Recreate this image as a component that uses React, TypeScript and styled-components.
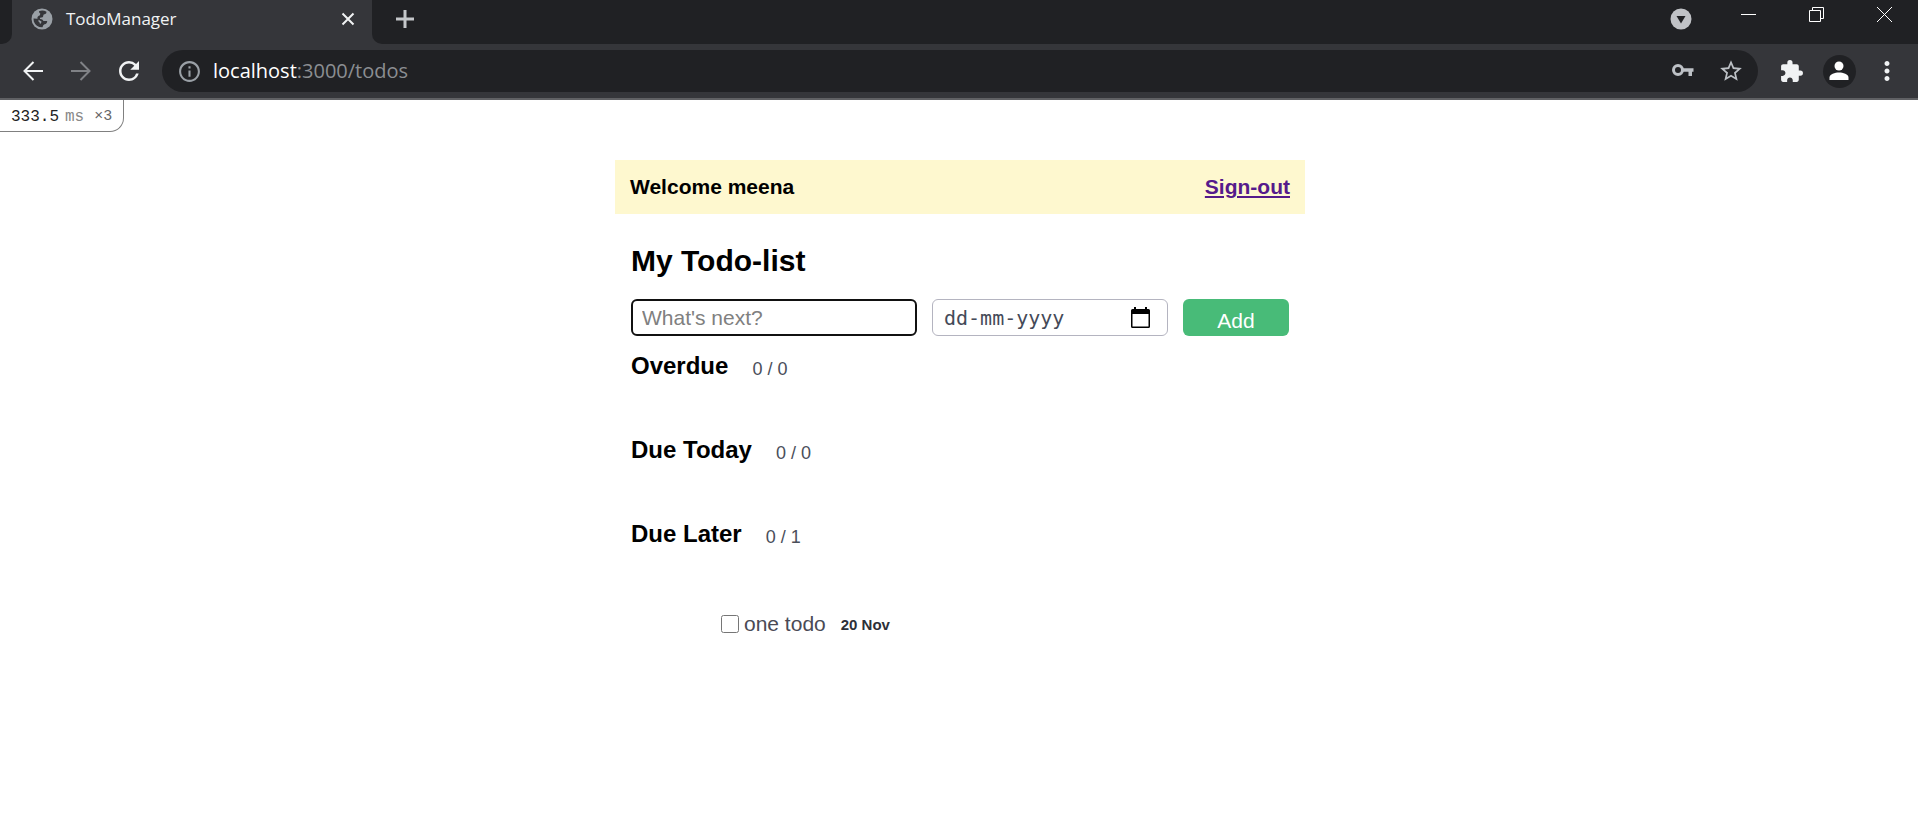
import React from "react";
import styled, { createGlobalStyle } from "styled-components";
import { MdExtension, MdInfoOutline, MdMoreVert, MdRefresh, MdStarBorder } from "react-icons/md";

const GlobalStyle = createGlobalStyle`
  *, *::before, *::after { box-sizing: border-box; }
  body { margin: 0; background: #fff; font-family: "Liberation Sans", Arial, sans-serif; }
  h1, h2, p, ul { margin: 0; padding: 0; }
  svg { display: block; }
`;

const chromeFont = `"Open Sans", "Segoe UI", sans-serif`;

/* Browser frame */

const TabStrip = styled.div`
  display: flex;
  height: 44px;
  background: #35363a;
  font-family: ${chromeFont};
`;

const StripEdge = styled.div`
  width: 12px;
  background: #202124;
  border-bottom-right-radius: 10px;
`;

const Tab = styled.div`
  display: flex;
  align-items: center;
  width: 360px;
  height: 38px;
  padding: 0 12px 0 19px;
  color: #9aa0a6;
`;

const TabTitle = styled.span`
  flex: 1;
  margin-left: 13px;
  font-size: 17px;
  line-height: 24px;
  color: #f1f3f4;
`;

const StripRest = styled.div`
  flex: 1;
  display: flex;
  justify-content: space-between;
  background: #202124;
  border-bottom-left-radius: 10px;
`;

const IconButton = styled.button<{ $w?: number; $h?: number; $color?: string }>`
  flex: none;
  display: flex;
  align-items: center;
  justify-content: center;
  width: ${(p) => p.$w ?? 48}px;
  height: ${(p) => p.$h ?? 42}px;
  padding: 0;
  border: 0;
  background: none;
  color: ${(p) => p.$color ?? "#f1f3f4"};
`;

const WindowControls = styled.div`
  display: flex;
`;

const Toolbar = styled.div`
  display: flex;
  align-items: center;
  height: 56px;
  padding: 0 7px 0 9px;
  background: #35363a;
  border-bottom: 2px solid #606164;
  font-family: ${chromeFont};
`;

const AddressBar = styled.div`
  flex: 1;
  display: flex;
  align-items: center;
  height: 42px;
  margin: 0 9px;
  padding: 0 3px 0 15px;
  border-radius: 21px;
  background: #202124;
  color: #9aa0a6;
`;

const Url = styled.span`
  flex: 1;
  margin-left: 11px;
  font-size: 20px;
  line-height: 28px;
  color: #8b8e92;
`;

const Host = styled.span`
  color: #fff;
`;

const Avatar = styled.span`
  display: flex;
  align-items: center;
  justify-content: center;
  width: 33px;
  height: 33px;
  border-radius: 50%;
  background: #202124;
`;

/* Page */

const Timing = styled.div`
  display: inline-flex;
  align-items: center;
  height: 32px;
  padding: 2px 11px 0;
  border: 1px solid #808080;
  border-width: 0 1px 1px 0;
  border-bottom-right-radius: 14px;
  font: 16px/24px "Liberation Mono", monospace;
  color: #222;
`;

const Unit = styled.span`
  margin-left: 6px;
  color: #888;
`;

const Calls = styled.span`
  margin-left: 10px;
  font-size: 15px;
  color: #666;
`;

const Page = styled.main`
  display: flex;
  justify-content: center;
  padding: 28px 0 0 2px;
`;

const Column = styled.div`
  flex: 1;
  max-width: 690px;
`;

const Banner = styled.header`
  display: flex;
  align-items: center;
  justify-content: space-between;
  height: 54px;
  padding: 0 15px;
  background: #fef8cf;
  font-size: 21px;
  font-weight: 700;
  line-height: 28px;
`;

const SignOut = styled.a`
  color: #551a8b;
`;

const Content = styled.div`
  padding: 27px 16px 0;
`;

const Title = styled.h1`
  font-size: 30px;
  line-height: 40px;
`;

const NewTodo = styled.form`
  display: flex;
  gap: 15px;
  height: 37px;
  margin-top: 18px;
`;

const TextField = styled.input`
  flex: 1;
  min-width: 0;
  padding: 0 9px;
  border: 2px solid #111;
  border-radius: 6px;
  outline: none;
  font: 21px/28px "Liberation Sans", Arial, sans-serif;
  &::placeholder { color: #808080; opacity: 1; }
`;

const DateBox = styled.div`
  display: flex;
  align-items: center;
  width: 236px;
  padding: 0 11px;
  border: 1px solid #b4b4c0;
  border-radius: 6px;
`;

const DateField = styled.input`
  flex: 1;
  min-width: 0;
  padding: 0;
  border: 0;
  outline: none;
  font: 20px/28px "DejaVu Sans Mono", monospace;
  &::placeholder { color: #454a58; opacity: 1; }
`;

const AddButton = styled.button`
  width: 106px;
  padding: 6px 0 0;
  border: 0;
  border-radius: 6px;
  background: #48bb78;
  color: #fff;
  font: 21px/28px "Liberation Sans", Arial, sans-serif;
`;

const Section = styled.section`
  display: flex;
  align-items: flex-start;
  gap: 24px;
  height: 84px;
  padding-top: 14px;
`;

const SectionTitle = styled.h2`
  font-size: 24px;
  line-height: 32px;
`;

const Count = styled.span`
  font-size: 18px;
  line-height: 38px;
  color: #4a4e5a;
`;

const TodoList = styled.ul`
  list-style: none;
  padding-left: 90px;
`;

const Todo = styled.li`
  display: flex;
  align-items: center;
  height: 72px;
`;

const Check = styled.input`
  width: 18px;
  height: 18px;
  margin: 0 5px 0 0;
`;

const TodoLabel = styled.label`
  font-size: 21px;
  line-height: 28px;
  color: #4a4a55;
`;

const Due = styled.time`
  margin-left: 15px;
  padding-top: 2px;
  font-size: 15px;
  font-weight: 700;
  line-height: 28px;
  color: #2d3038;
`;

const Stroke = ({ d, size, width = 2 }: { d: string; size: number; width?: number }) => (
  <svg width={size} height={size} viewBox={`0 0 ${size} ${size}`} fill="none" stroke="currentColor" strokeWidth={width}>
    <path d={d} />
  </svg>
);

const sections = [
  { name: "Overdue", count: "0 / 0" },
  { name: "Due Today", count: "0 / 0" },
  { name: "Due Later", count: "0 / 1" },
];

export default function App() {
  return (
    <>
      <GlobalStyle />
      <TabStrip>
        <StripEdge />
        <Tab>
          <svg width="22" height="22" viewBox="0 0 22 22">
            <circle cx="11" cy="11" r="10.5" fill="currentColor" />
            <path
              fill="#35363a"
              d="M8 3.200Q12 1.800 15.500 3.800Q15.800 6 13.500 6.300Q12 6.500 12.200 8.200Q12 9.800 9.800 9.600Q8.500 9.800 9 11Q11.500 10.800 12.500 13H16.200Q16.200 16 13.500 16.300Q12 16.800 11.500 19.300Q5 19.500 2.800 13.500L2.500 10.500L6.500 10.800Q8 12 7.500 13.500Q9 14 9 16Q10.500 15 10.500 13.500Q9 12.500 7 11.500Q5.500 9.500 7.500 8Q9.500 7.500 9.300 5.500Q8 5 8 3.200Z"
            />
          </svg>
          <TabTitle>TodoManager</TabTitle>
          <IconButton $w={24} $h={24} aria-label="Close tab">
            <Stroke size={14} width={2} d="M1.5 1.5L12.5 12.5M12.5 1.5L1.5 12.5" />
          </IconButton>
        </Tab>
        <StripRest>
          <IconButton $w={66} $h={38} $color="#c4c7ca" aria-label="New tab">
            <Stroke size={18} width={3} d="M9 0V18M0 9H18" />
          </IconButton>
          <WindowControls>
            <IconButton $w={66} $h={37} $color="#c0c2c6" aria-label="Search tabs">
              <svg width="22" height="22" viewBox="0 0 22 22">
                <circle cx="11" cy="11" r="10.5" fill="currentColor" />
                <path d="M6.5 8H15.5L11 15.5Z" fill="#202124" />
              </svg>
            </IconButton>
            <IconButton $w={68} $h={29} $color="#fff" aria-label="Minimize">
              <Stroke size={15} width={1} d="M0 7.5H15" />
            </IconButton>
            <IconButton $w={68} $h={29} $color="#fff" aria-label="Restore">
              <Stroke size={15} width={1} d="M.5 3.5H11.5V14.5H.5ZM3.5 3.5V.5H14.5V11.5H11.5" />
            </IconButton>
            <IconButton $w={68} $h={29} $color="#fff" aria-label="Close">
              <Stroke size={15} width={1} d="M0 0L15 15M15 0L0 15" />
            </IconButton>
          </WindowControls>
        </StripRest>
      </TabStrip>
      <Toolbar>
        <IconButton aria-label="Back">
          <Stroke size={20} width={2} d="M20 10H1.5M10.5 1L1.5 10L10.5 19" />
        </IconButton>
        <IconButton $color="#808286" aria-label="Forward">
          <Stroke size={20} width={2} d="M0 10H18.5M9.5 1L18.5 10L9.5 19" />
        </IconButton>
        <IconButton aria-label="Reload">
          <MdRefresh size={30} />
        </IconButton>
        <AddressBar>
          <MdInfoOutline size={25} />
          <Url>
            <Host>localhost</Host>:3000/todos
          </Url>
          <IconButton $color="#bdc1c6" aria-label="Passwords">
            <svg width="22" height="14" viewBox="0 0 22 14" fill="currentColor">
              <circle cx="6" cy="6" r="4.5" fill="none" stroke="currentColor" strokeWidth="3" />
              <path d="M11 4.300H21.500V7.800H20V12H16.500V7.800H11Z" />
            </svg>
          </IconButton>
          <IconButton $color="#bdc1c6" aria-label="Bookmark">
            <MdStarBorder size={26} />
          </IconButton>
        </AddressBar>
        <IconButton aria-label="Extensions">
          <MdExtension size={25} />
        </IconButton>
        <IconButton $color="#fff" aria-label="Profile">
          <Avatar>
            <svg width="20" height="20" viewBox="0 0 20 20" fill="currentColor">
              <circle cx="10" cy="5" r="4.5" />
              <path d="M.5 19V16.5C.5 13.2 6 11.5 10 11.5S19.500 13.200 19.500 16.500V19Z" />
            </svg>
          </Avatar>
        </IconButton>
        <IconButton aria-label="Menu">
          <MdMoreVert size={30} />
        </IconButton>
      </Toolbar>
      <Timing>
        333.5<Unit>ms</Unit>
        <Calls>×3</Calls>
      </Timing>
      <Page>
        <Column>
          <Banner>
            <p>Welcome meena</p>
            <SignOut href="#signout">Sign-out</SignOut>
          </Banner>
          <Content>
            <Title>My Todo-list</Title>
            <NewTodo onSubmit={(e) => e.preventDefault()}>
              <TextField type="text" placeholder="What's next?" aria-label="What's next?" />
              <DateBox>
                <DateField type="text" placeholder="dd-mm-yyyy" aria-label="Due date" />
                <IconButton $w={32} $h={30} $color="#000" type="button" aria-label="Pick a date">
                  <svg width="19" height="21" viewBox="0 0 19 21">
                    <path
                      fill="currentColor"
                      fillRule="evenodd"
                      d="M3 0H5V2H14V0H16V2H17.500Q19 2 19 3.500V19.500Q19 21 17.500 21H1.500Q0 21 0 19.500V3.500Q0 2 1.500 2H3ZM1.500 7V19.500H17.500V7Z"
                    />
                  </svg>
                </IconButton>
              </DateBox>
              <AddButton type="submit">Add</AddButton>
            </NewTodo>
            {sections.map((s) => (
              <Section key={s.name}>
                <SectionTitle>{s.name}</SectionTitle>
                <Count>{s.count}</Count>
              </Section>
            ))}
            <TodoList>
              <Todo>
                <Check type="checkbox" id="todo-1" />
                <TodoLabel htmlFor="todo-1">one todo</TodoLabel>
                <Due>20 Nov</Due>
              </Todo>
            </TodoList>
          </Content>
        </Column>
      </Page>
    </>
  );
}
